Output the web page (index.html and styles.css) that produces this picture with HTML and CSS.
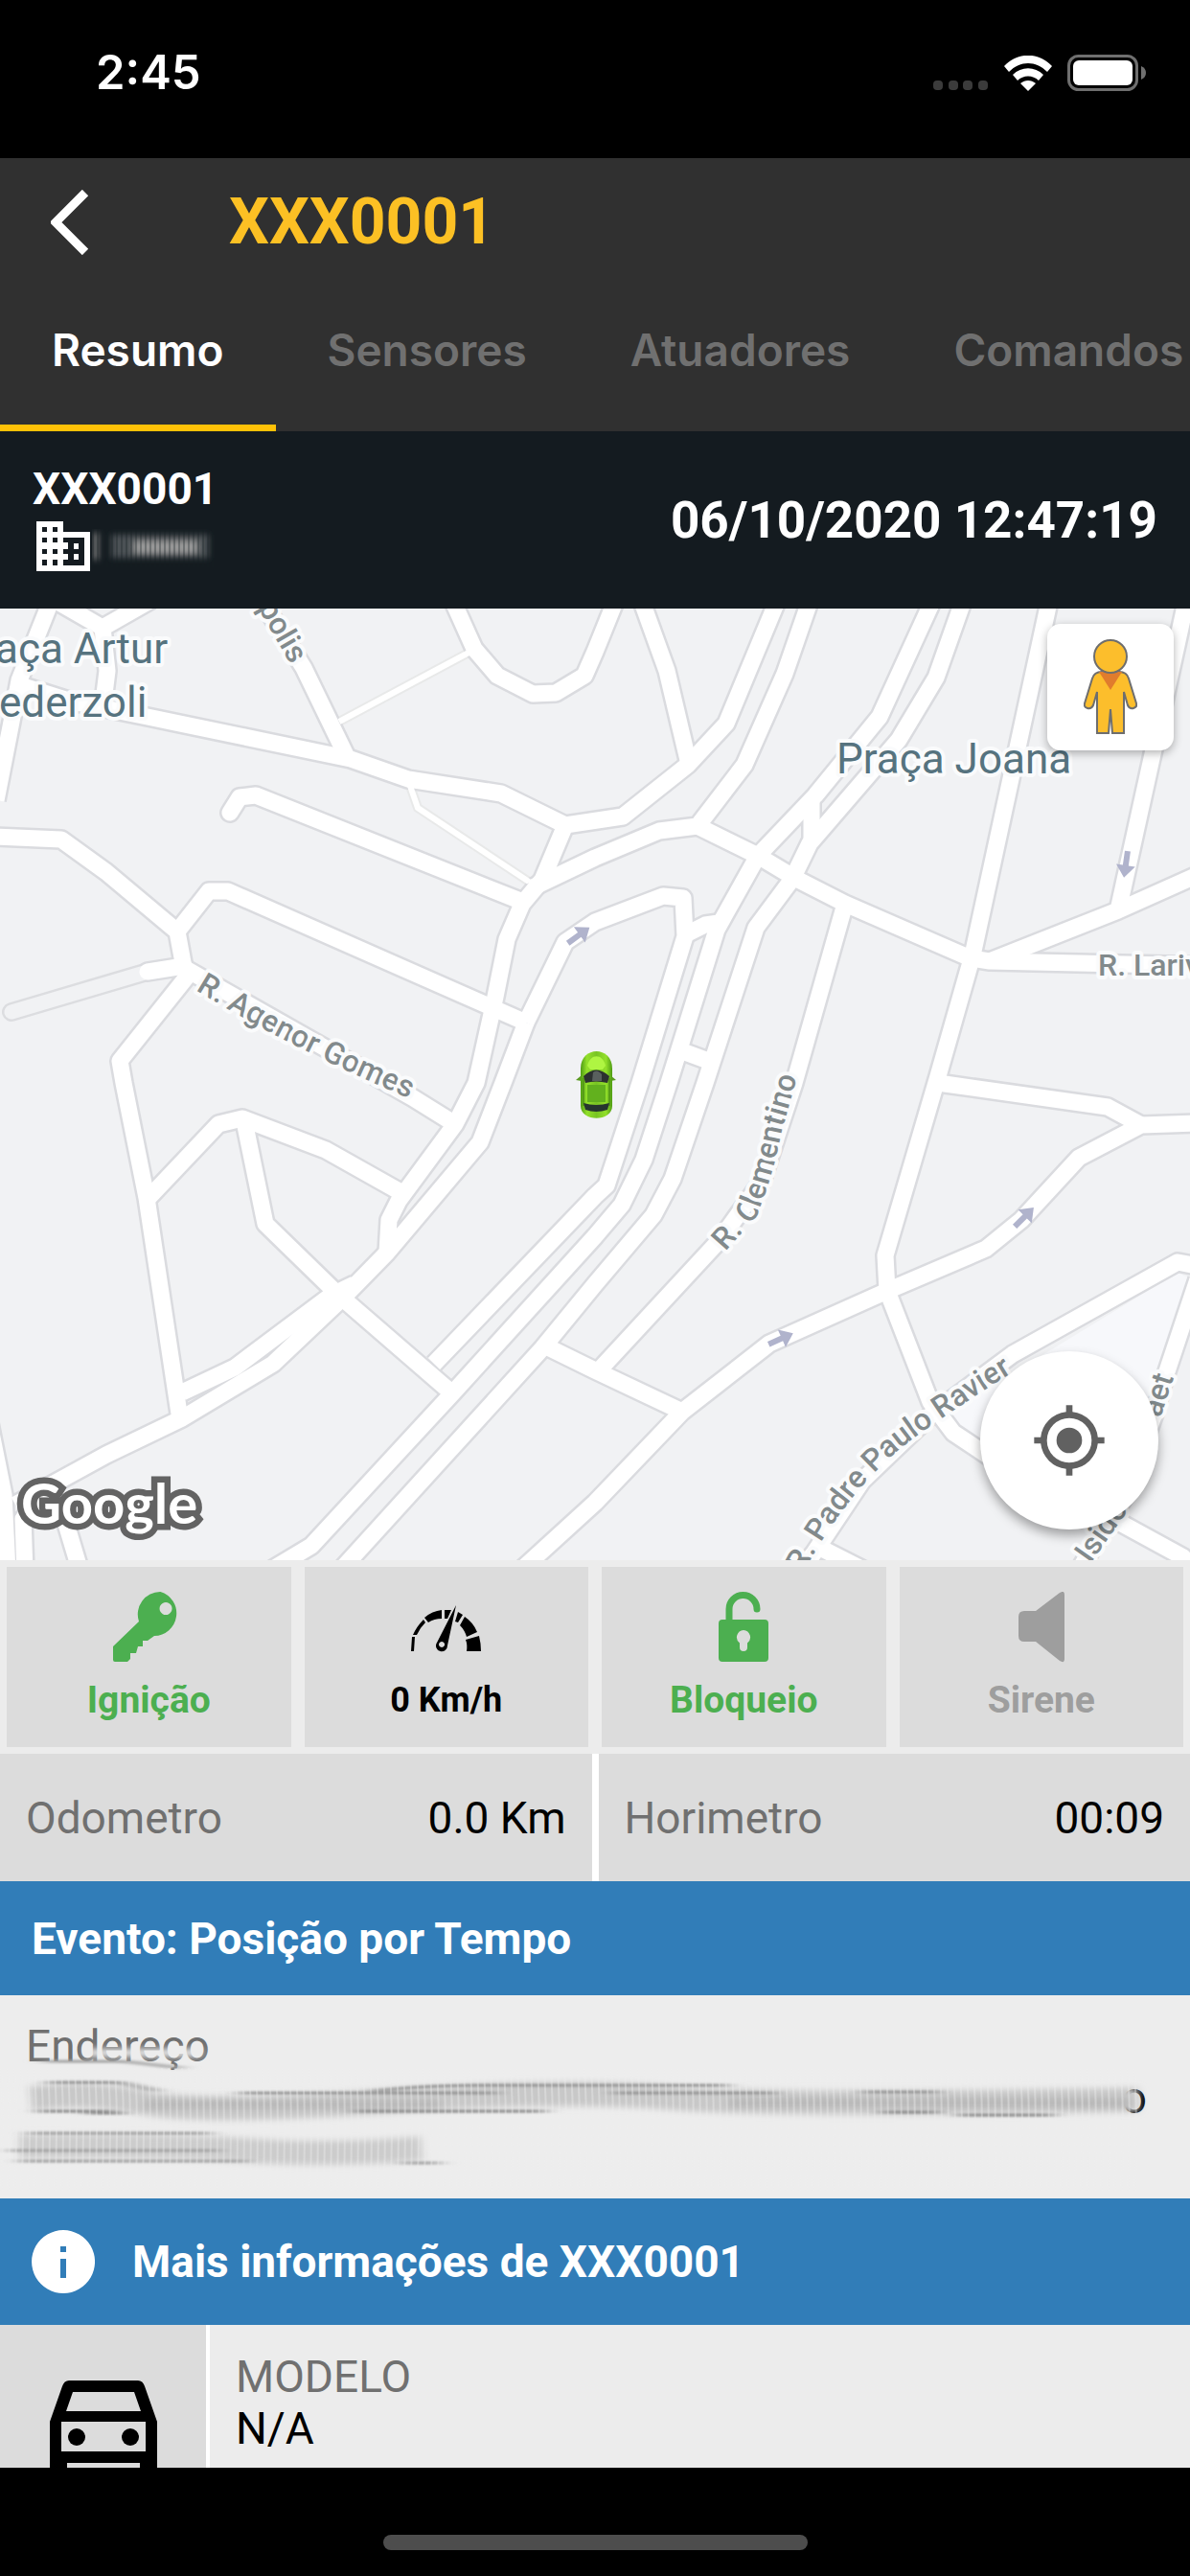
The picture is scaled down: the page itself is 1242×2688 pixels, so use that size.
FILE: index.html
```html
<!DOCTYPE html>
<html lang="pt-BR">
<head>
<meta charset="utf-8">
<meta name="viewport" content="width=device-width, initial-scale=1">
<title>XXX0001</title>
<link rel="stylesheet" href="styles.css">
</head>
<body>
<div class="app">
  <div class="status">
    <time class="status-time">2:45</time>
    <div class="status-icons">
      <svg class="dots" width="58" height="10" viewBox="0 0 58 10"><g fill="#3b3b3b"><rect width="10" height="10" rx="4"/><rect x="16" width="10" height="10" rx="4"/><rect x="31" width="10" height="10" rx="4"/><rect x="47" width="10" height="10" rx="4"/></g></svg>
      <svg width="50" height="37" viewBox="0 0 50 37" fill="#fff"><path d="M0 11C14-4 36-4 50 11l-5 6C33 5 17 5 5 17z"/><path d="M9 20c9-9 23-9 32 0l-5 6c-6-6-16-6-22 0z"/><path d="M17 29c5-4 11-4 16 0l-8 8z"/></svg>
      <svg width="82" height="38" viewBox="0 0 82 38"><rect x="1.500" y="1.500" width="71" height="35" rx="10" fill="none" stroke="#6f6f6f" stroke-width="3"/><rect x="6" y="6" width="62" height="26" rx="6" fill="#fff"/><path d="M77 12q5 2 5 7t-5 7z" fill="#6f6f6f"/></svg>
    </div>
  </div>

  <header class="header">
    <div class="title-row">
      <button class="back" aria-label="Voltar"><svg width="40" height="68" viewBox="0 0 40 68"><path d="M36 3 5 34l31 31" fill="none" stroke="#fff" stroke-width="9"/></svg></button>
      <h1 class="title">XXX0001</h1>
    </div>
    <nav class="tabs">
      <a class="tab tab-active" href="#resumo">Resumo</a>
      <a class="tab" href="#sensores">Sensores</a>
      <a class="tab" href="#atuadores">Atuadores</a>
      <a class="tab" href="#comandos">Comandos</a>
    </nav>
  </header>

  <main class="content" id="resumo">
    <section class="vehicle">
      <div>
        <div class="vehicle-name">XXX0001</div>
        <div class="vehicle-owner">
          <svg width="56" height="52" viewBox="0 0 56 52"><path fill="#fff" fill-rule="evenodd" d="M0 0h28v11h28v41H0zM6 6v5h5V6zm11 0v5h5V6zM6 17v5h5v-5zm11 0v5h5v-5zM6 29v5h5v-5zm11 0v5h5v-5zM6 40v6h5v-6zm11 0v6h5v-6zM28 17v5h5v7h-5v5h5v6h-5v6h22V17zM39 23h5v6h-5zm0 11h5v6h-5z"/></svg>
          <svg class="smudge" width="128" height="40" viewBox="0 0 128 40">
            <defs><pattern id="ribsLight" width="5" height="40" patternUnits="userSpaceOnUse"><path d="M1 0v40" stroke="#141b20" stroke-width="1" opacity=".6"/></pattern><filter id="soft" x="-20%" y="-20%" width="140%" height="140%" filterUnits="userSpaceOnUse"><feGaussianBlur stdDeviation="3"/></filter></defs>
            <g filter="url(#soft)"><path d="M4 4v28" stroke="#777" stroke-width="6"/><path d="M20 18h102" stroke="#4c5154" stroke-width="24"/><path d="M44 19h66" stroke="#999" stroke-width="13"/></g>
            <rect width="128" height="40" fill="url(#ribsLight)"/>
          </svg>
        </div>
      </div>
      <time class="vehicle-time">06/10/2020 12:47:19</time>
    </section>

    <section class="map" aria-label="Mapa">
      <svg class="map-canvas" viewBox="0 635 1242 993">
        <defs>
          <g id="roads" fill="none" stroke-linejoin="round">
            <path d="M52 630 20 710 12 753-4 835"/>
            <path d="M60 628 107 655 158 626M107 655 112 700 107 740"/>
            <path d="M12 712 75 732 154 748 366 792 426 813 523 828 590 861 650 852 718 798 758 755 810 630"/>
            <path d="M274 628 317 697 362 790"/>
            <path d="M473 628 495 677 519 705 556 724 580 723 610 705 621 680 642 628"/>
            <path d="M670 628 696 700 718 793"/>
            <path d="M845 628 819 703 777 798 728 862 688 867 621 895 554 927"/>
            <path d="M590 861 566 918 545 943 529 980 517 1040 497 1130 475 1173 416 1253 406 1273 404 1307"/>
            <path d="M728 862 791 893 831 917 882 943 1013 1000 1033 1003 1260 1008"/>
            <path d="M1033 1003 1167 950 1252 912"/>
            <path d="M973 628 918 748 851 830 791 893 748 970 698 1130 672 1210 649 1257 621 1290 473 1453 325 1613 280 1640"/>
            <path d="M1005 628 977 707 938 772 845 880 827 917 789 968 736 1130 702 1230 682 1268 621 1340 566 1407 354 1640"/>
            <path d="M847 833V880"/>
            <path d="M715 1098 742 1108"/>
            <path d="M716 975 736 965 750 963"/>
            <path d="M549 1067 590 983 621 962 692 935 713 937 715 977 668 1130 633 1237 621 1248 453 1423"/>
            <path d="M549 1067 525 1130 501 1192 404 1307 360 1352 285 1423 190 1480 111 1518 16 1570"/>
            <path d="M370 1340 345 1352 245 1427 190 1453"/>
            <path d="M882 943 829 1130 795 1233 752 1293 625 1430"/>
            <path d="M566 1403 621 1430 712 1473"/>
            <path d="M542 1640 621 1568 712 1473 803 1402 926 1347 1029 1303 1066 1273 1126 1208 1191 1174 1252 1172"/>
            <path d="M1095 628 1015 997 979 1123 924 1310 926 1347 971 1463 995 1495 1037 1523 1171 1590 1235 1625 1245 1645"/>
            <path d="M979 1130 1156 1155 1191 1174"/>
            <path d="M1238 628 1167 950"/>
            <path d="M1255 1322 1229 1317 1057 1413 971 1477 900 1545 850 1620 830 1645"/>
            <path d="M1250 1335 1215 1440 1205 1475 1175 1560 1125 1640"/>
            <path d="M850 1612 905 1640"/>
            <path d="M-8 873 64 876 111 910 185 972 192 1010 430 1145 475 1173"/>
            <path d="M200 1013 125 1107 129 1130 153 1250 187 1475"/>
            <path d="M185 972 218 930 238 930 549 1067"/>
            <path d="M240 848 250 832 267 830 543 940" stroke-linecap="round"/>
            <path d="M155 1250 228 1173 253 1167 340 1200 420 1245"/>
            <path d="M255 1170 277 1277 352 1350 471 1453"/>
            <path d="M-12 1480 4 1560 8 1640M26 1640 24 1585 50 1558M66 1580 84 1640"/>
            <path d="M154 1014 192 1008" stroke-linecap="round"/>
          </g>
          <g id="arrow"><path d="M-14-3H1V-10L14 0 1 10V3H-14z" fill="#b0b3cc"/></g>
          <path id="streetAgenor" d="M204 1033 Q310 1098 450 1156"/>
          <path id="streetClementino" d="M757 1306 789 1270 Q806 1230 816 1180 L850 1060"/>
          <path id="streetRavier" d="M838 1642 Q890 1545 960 1496 T1090 1412"/>
          <linearGradient id="carPaint" x2="1" y2="0"><stop stop-color="#4f9c14"/><stop offset=".2" stop-color="#93e02a"/><stop offset=".5" stop-color="#78c424"/><stop offset=".8" stop-color="#93e02a"/><stop offset="1" stop-color="#4f9c14"/></linearGradient>
        </defs>
        <rect y="635" width="1242" height="993" fill="#f1f2f4"/>
        <path d="M1229 1328 1245 1335 1190 1540 1037 1523 980 1480z" fill="#f7f8fb"/>
        <path d="M491 680 354 753M428 820 436 843 552 920" fill="none" stroke="#e8e9e9" stroke-width="10"/>
        <path d="M12 1056 154 1014" stroke="#dcdde0" stroke-width="20" stroke-linecap="round"/>
        <use href="#roads" stroke="#dadbdf" stroke-width="22"/>
        <path d="M12 1056 154 1014" stroke="#f1f2f4" stroke-width="15" stroke-linecap="round"/>
        <path d="M491 680 354 753M428 820 436 843 552 920" fill="none" stroke="#fff" stroke-width="6"/>
        <use href="#roads" stroke="#fff" stroke-width="17"/>
        <use href="#arrow" transform="translate(604 976) rotate(-36)"/>
        <use href="#arrow" transform="translate(1175 902) rotate(98)"/>
        <use href="#arrow" transform="translate(1069 1270) rotate(-45)"/>
        <use href="#arrow" transform="translate(815 1397) rotate(-24)"/>
        <g class="place">
          <text x="-5" y="692">aça Artur</text>
          <text x="-1" y="748">ederzoli</text>
          <text x="873" y="807">Praça Joana</text>
        </g>
        <g class="street">
          <text x="1146" y="1018">R. Lariv</text>
          <text transform="translate(269 634) rotate(60)">polis</text>
          <text><textPath href="#streetAgenor">R. Agenor Gomes</textPath></text>
          <text><textPath href="#streetClementino">R. Clementino</textPath></text>
          <text><textPath href="#streetRavier">R. Padre Paulo Ravier</textPath></text>
          <text transform="translate(1211 1480) rotate(-72)">aet</text>
          <text transform="translate(1138 1632) rotate(-55)">Isido</text>
        </g>
        <g transform="translate(601 1097)">
          <path d="M0 30 6 25H36L42 30 36 31H6z" fill="#5a9a20"/>
          <path d="M5 18C5-6 38-6 38 18V57C38 74 5 74 5 57z" fill="url(#carPaint)"/>
          <path d="M12 15C15 2 28 2 31 15L28 19H15z" fill="#aff542"/>
          <path d="M8 26Q21 13 35 26L33 33Q21 30 10 33z" fill="#2c3130"/>
          <path d="M18 22Q22 18 27 24V31H17z" fill="#59605e"/>
          <path d="M12 35H31V53H12z" fill="#62b11e"/>
          <path d="M8 28V57M35 28V57" stroke="#417f12" stroke-width="1"/>
          <path d="M8 54Q21 58 35 54L33 61Q21 65 10 61z" fill="#26362f"/>
        </g>
        <text class="brand" x="22" y="1590">Google</text>
      </svg>
      <button class="pegman" aria-label="Street View"><svg width="56" height="100" viewBox="0 0 56 100"><path d="M19 34Q11 34 9 41L1 67Q0 71 4 72 8 73 10 69L14 55V98H26L28 73 30 98H42V55L46 69Q48 73 52 72 56 71 55 67L47 41Q45 34 37 34z" fill="#fcbe2c" stroke="#6e6e6e" stroke-width="2"/><path d="M16 34H40L28 53z" fill="#e07c2d"/><circle cx="28" cy="18" r="17" fill="#fcbe2c" stroke="#6e6e6e" stroke-width="2"/></svg></button>
      <button class="locate" aria-label="Centralizar"><svg width="80" height="80" viewBox="0 0 24 24" fill="#616161"><path d="M12 8a4 4 0 1 0 0 8 4 4 0 0 0 0-8zm8.940 3A8.990 8.990 0 0 0 13 3.060V1h-2v2.060A8.990 8.990 0 0 0 3.060 11H1v2h2.060A8.990 8.990 0 0 0 11 20.940V23h2v-2.060A8.990 8.990 0 0 0 20.940 13H23v-2zM12 19a7 7 0 1 1 0-14 7 7 0 0 1 0 14z"/></svg></button>
    </section>

    <section class="tiles">
      <button class="tile tile-on"><svg width="74" height="74" viewBox="0 0 74 74"><path fill="#4caf50" fill-rule="evenodd" d="M49.500 0A23.500 23.500 0 0 1 43 46L36 51H31V57H26L24 64H18V70L15 73H2Q0 73 0 71V57L27 31A23.500 23.500 0 0 1 49.500 0zM55 11a6.500 6.500 0 1 0 .1 0z"/></svg><span>Ignição</span></button>
      <button class="tile tile-speed"><svg width="74" height="50" viewBox="0 0 74 50"><path d="M0 48 1 33H4L3 48zM2 31Q6 22 13 15L15 18Q9 24 6 31zM14 13Q22 6 32 5V14Q24 14 18 18zM35 5H42L38 14H35zM49 7 54 10 49 18 46 17zM56 12Q65 18 69 28L58 33Q56 26 51 21zM71 32Q73 40 73 48H58Q59 41 57 36z"/><path fill-rule="evenodd" d="M47 0 38 42A6 6 0 1 1 27 39zM32 38a3 3 0 1 0 .1 0z"/></svg><span>0 Km/h</span></button>
      <button class="tile tile-on"><svg width="52" height="74" viewBox="0 0 52 74"><path d="M11 34V18a14.500 14.500 0 0 1 29 0" fill="none" stroke="#4caf50" stroke-width="7" stroke-linecap="round"/><path fill="#4caf50" fill-rule="evenodd" d="M4 29H48Q52 29 52 33V69Q52 73 48 73H4Q0 73 0 69V33Q0 29 4 29zM26 40a7.500 7.500 0 0 0-4 13.500V58q0 4 4 4t4-4V53.500A7.500 7.500 0 0 0 26 40z"/></svg><span>Bloqueio</span></button>
      <button class="tile tile-off"><svg width="48" height="74" viewBox="0 0 48 74"><path fill="#9e9e9e" d="M6 20H18L43 1Q48-2 48 3V70Q48 75 43 72L18 52H6Q0 52 0 46V26Q0 20 6 20z"/></svg><span>Sirene</span></button>
    </section>

    <dl class="meters">
      <div class="meter"><dt>Odometro</dt><dd>0.0 Km</dd></div>
      <div class="meter"><dt>Horimetro</dt><dd>00:09</dd></div>
    </dl>

    <h2 class="bar">Evento: Posição por Tempo</h2>

    <section class="address">
      <div class="label">Endereço</div>
      <div class="address-line">
      <svg class="address-smudge" viewBox="0 0 1242 130" width="1242" height="130">
        <defs>
          <pattern id="ribs" width="7" height="130" patternUnits="userSpaceOnUse"><path d="M1 0Q5 65 1 130" stroke="#ededed" stroke-width="2" fill="none" opacity=".4"/></pattern>
          <filter id="blurBand" x="-5%" y="-50%" width="110%" height="200%"><feGaussianBlur stdDeviation="5 3"/></filter>
          <filter id="blurLine" x="-5%" y="-400%" width="110%" height="900%"><feGaussianBlur stdDeviation="9 1"/></filter>
        </defs>
        <g fill="none" filter="url(#blurBand)">
          <path d="M32 32Q90 24 150 36T400 35 700 31 1188 33" stroke="#c8c8c8" stroke-width="25"/>
          <path d="M20 82Q180 80 260 86T440 84" stroke="#cccccc" stroke-width="25"/>
          <path d="M150 38H460M760 36H1180" stroke="#b8b8b8" stroke-width="10"/>
          <path d="M90-16H210" stroke="#ededed" stroke-width="8"/>
        </g>
        <g fill="none" stroke-width="3" filter="url(#blurLine)">
          <path d="M50 15H125L165 24M390 24Q440 18 500 18H760M250 26H520M640 26H810M900 25H980" stroke="#979797"/>
          <path d="M40 45H120M370 45H570M920 46H980M90 47H130M1000 49H1100" stroke="#8e8e8e"/>
          <path d="M10 86H230M30 68H220M20 97H260M420 99H460" stroke="#a4a4a4"/>
          <path d="M45-7H130L190 0" stroke="#a4a4a4"/>
        </g>
        <rect width="1188" height="130" fill="url(#ribs)"/>
      </svg>
      <span>o</span>
      </div>
    </section>

    <h2 class="bar bar-info"><svg width="66" height="66" viewBox="0 0 66 66"><path fill="#fff" fill-rule="evenodd" d="M33 0a33 33 0 1 0 .1 0zM30 17h6v6h-6zM30 30h6v20h-6z"/></svg><span>Mais informações de XXX0001</span></h2>

    <section class="detail">
      <div class="detail-icon"><svg width="112" height="112" viewBox="0 0 112 112"><path fill-rule="evenodd" d="M20 0H92Q97 0 99 6L112 43V108H98V100H14V108H0V43L13 6Q15 0 20 0zM24 12 17 32H95L88 12zM12 43V74H100V43zM18 86V94H94V86z"/><circle cx="28" cy="59" r="9"/><circle cx="84" cy="59" r="9"/></svg></div>
      <div class="detail-text"><div class="label">MODELO</div><div>N/A</div></div>
    </section>
  </main>

  <footer class="home"><div class="home-pill"></div></footer>
</div>
</body>
</html>
```
FILE: styles.css
```css
* { box-sizing: border-box; }
body { margin: 0; background: #000; color: #000; font-family: Roboto, "Liberation Sans", sans-serif; font-size: 46px; line-height: 54px; }
button { font: inherit; border: 0; padding: 0; margin: 0; }
svg { display: block; flex: none; }
h1, h2, dl, dd { margin: 0; }

.app { height: 100vh; display: flex; flex-direction: column; }

.status { flex: none; height: 165px; padding: 46px 46px 59px 100px; display: flex; justify-content: space-between; align-items: center; color: #fff; }
.status-time { font: 600 49px/60px Inter, sans-serif; }
.status-icons { display: flex; align-items: center; gap: 16px; }
.dots { align-self: flex-end; margin-bottom: 1px; }

.header { flex: none; background: #303030; }
.title-row { height: 134px; padding: 0 53px; display: flex; align-items: center; gap: 146px; }
.back { background: none; }
.title { color: #fcc024; font-size: 66px; line-height: 80px; font-weight: 700; }
.tabs { display: flex; overflow: hidden; }
.tab { flex: none; height: 151px; padding: 36px 54px 0; color: #707070; font: 600 46px/60px Inter, sans-serif; text-decoration: none; border-bottom: 7px solid transparent; }
.tab-active { color: #fff; border-color: #ffc107; }

.content { flex: 1; min-height: 0; overflow: hidden; background: #fff; }

.vehicle { height: 185px; padding: 0 34px 6px; background: #141b20; color: #fff; font-weight: 700; display: flex; justify-content: space-between; align-items: center; }
.vehicle-name { font-size: 46px; line-height: 60px; }
.vehicle-owner { display: flex; gap: 2px; padding: 4px; }
.smudge { margin-top: 8px; }
.vehicle-time { font-size: 53px; line-height: 60px; padding-top: 6px; }

.map { position: relative; }
.map-canvas { width: 100%; height: auto; }
.place, .street { font-family: Roboto, sans-serif; stroke: #fafbfc; stroke-width: 8px; stroke-linejoin: round; paint-order: stroke; }
.place { font-size: 44px; fill: #56737f; }
.street { font-size: 32px; font-weight: 500; fill: #828a8c; }
.brand { font: 700 58px Lato, sans-serif; fill: #fff; stroke: #636363; stroke-width: 13px; paint-order: stroke; }
.pegman { position: absolute; top: 16px; right: 17px; width: 132px; height: 132px; border-radius: 14px; background: #fff; box-shadow: 0 3px 10px rgba(0, 0, 0, .3); display: flex; align-items: center; justify-content: center; }
.locate { position: absolute; right: 33px; bottom: 32px; width: 186px; height: 186px; border-radius: 50%; background: #fff; box-shadow: 0 6px 12px rgba(0, 0, 0, .35); display: flex; align-items: center; justify-content: center; }

.tiles { display: grid; grid-template-columns: repeat(4, 1fr); }
.tile { height: 202px; border: 7px solid #ececec; background: #dcdcdc; padding-top: 26px; display: flex; flex-direction: column; align-items: center; justify-content: flex-start; gap: 14px; font-size: 39px; line-height: 50px; font-weight: 700; }
.tile-on { color: #4caf50; }
.tile-off { color: #9e9e9e; }
.tile-speed { padding-top: 40px; gap: 24px; font-size: 36px; color: #000; }

.meters { display: grid; grid-template-columns: 1fr 1fr; gap: 7px; background: #fff; }
.meter { height: 133px; padding: 0 27px; background: #dcdcdc; display: flex; justify-content: space-between; align-items: center; }
.meter dt, .label { color: #707070; }

.bar { background: #317db8; color: #fff; font-size: 46px; line-height: 54px; font-weight: 700; padding: 33px; height: 119px; }
.bar-info { height: 132px; display: flex; align-items: center; gap: 39px; }

.address { height: 212px; padding: 26px 27px; background: #ededed; }
.address-line { position: relative; text-align: right; padding-right: 18px; }
.address-smudge { position: absolute; left: -27px; top: -4px; overflow: visible; }

.detail { display: flex; background: #ececec; height: 196px; }
.detail-icon { width: 219px; padding: 58px 52px; background: #dcdcdc; border-right: 4px solid #fff; }
.detail-text { padding: 27px; }

.home { flex: none; height: 113px; background: #000; padding-top: 70px; }
.home-pill { width: 443px; height: 16px; margin: 0 auto; border-radius: 8px; background: #4d4d4d; }
```
